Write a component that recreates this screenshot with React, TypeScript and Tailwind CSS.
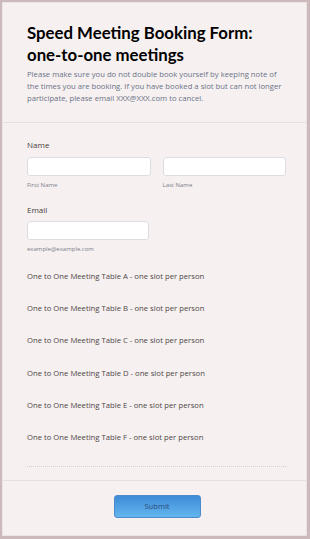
const tables = ['A', 'B', 'C', 'D', 'E', 'F']

export default function App() {
  return (
    <div className="h-[539px] w-[310px] bg-[#cbb9bc] p-[2px] pb-[3px] pr-[3px] font-['Open_Sans',sans-serif]">
      <div className="flex h-full flex-col border border-[#ebe4e5] bg-[#f6f0f0]">
        <header className="border-b border-[#e6e0e3] pb-[18px] pl-[24px] pr-[20px] pt-[19px]">
          <h1 className="font-['Lato',sans-serif] text-[16.8px] font-bold leading-[22px] text-black">
            Speed Meeting Booking Form: one-to-one meetings
          </h1>
          <p className="mt-[1.5px] text-[7.7px] leading-[12px] text-[#6b7388]">
            Please make sure you do not double book yourself by keeping note of the times you are booking. If you have booked a slot but can not longer participate, please email XXX@XXX.com to cancel.
          </p>
        </header>

        <div className="flex-1 pl-[24px] pr-[20px] pt-[16px]">
          <div>
            <p className="text-[8px] leading-[12px] text-[#4a4040]">Name</p>
            <div className="mt-[6px] grid grid-cols-2 gap-[12px]">
              <div>
                <div className="h-[19px] rounded-[3px] border border-[#dcdde3] bg-white" />
                <p className="mt-[5px] text-[6px] leading-[8px] text-[#7b7f8c]">First Name</p>
              </div>
              <div>
                <div className="h-[19px] rounded-[3px] border border-[#dcdde3] bg-white" />
                <p className="mt-[5px] text-[6px] leading-[8px] text-[#7b7f8c]">Last Name</p>
              </div>
            </div>
          </div>

          <div className="mt-[15px]">
            <p className="text-[8px] leading-[12px] text-[#4a4040]">Email</p>
            <div className="mt-[5px] h-[19px] w-[122px] rounded-[3px] border border-[#dcdde3] bg-white" />
            <p className="mt-[5px] text-[6px] leading-[8px] text-[#7b7f8c]">example@example.com</p>
          </div>

          <div className="mt-[17px] flex flex-col gap-[20.4px]">
            {tables.map((t) => (
              <p key={t} className="text-[7.7px] leading-[12px] text-[#4d4747]">
                One to One Meeting Table {t} - one slot per person
              </p>
            ))}
          </div>

          <div className="mt-[23px] border-t border-dotted border-[#d3cdcf]" />
        </div>

        <footer className="mt-[11px] flex justify-center border-t border-[#e6e0e3] pb-[17px] pl-[5px] pt-[14px]">
          <button className="h-[23px] w-[87px] rounded-[3px] border border-[#4a8bcc] bg-gradient-to-b from-[#3f8bd7] to-[#63b6ee] text-[7.6px] text-[#2d4b7c]">
            Submit
          </button>
        </footer>
      </div>
    </div>
  )
}
